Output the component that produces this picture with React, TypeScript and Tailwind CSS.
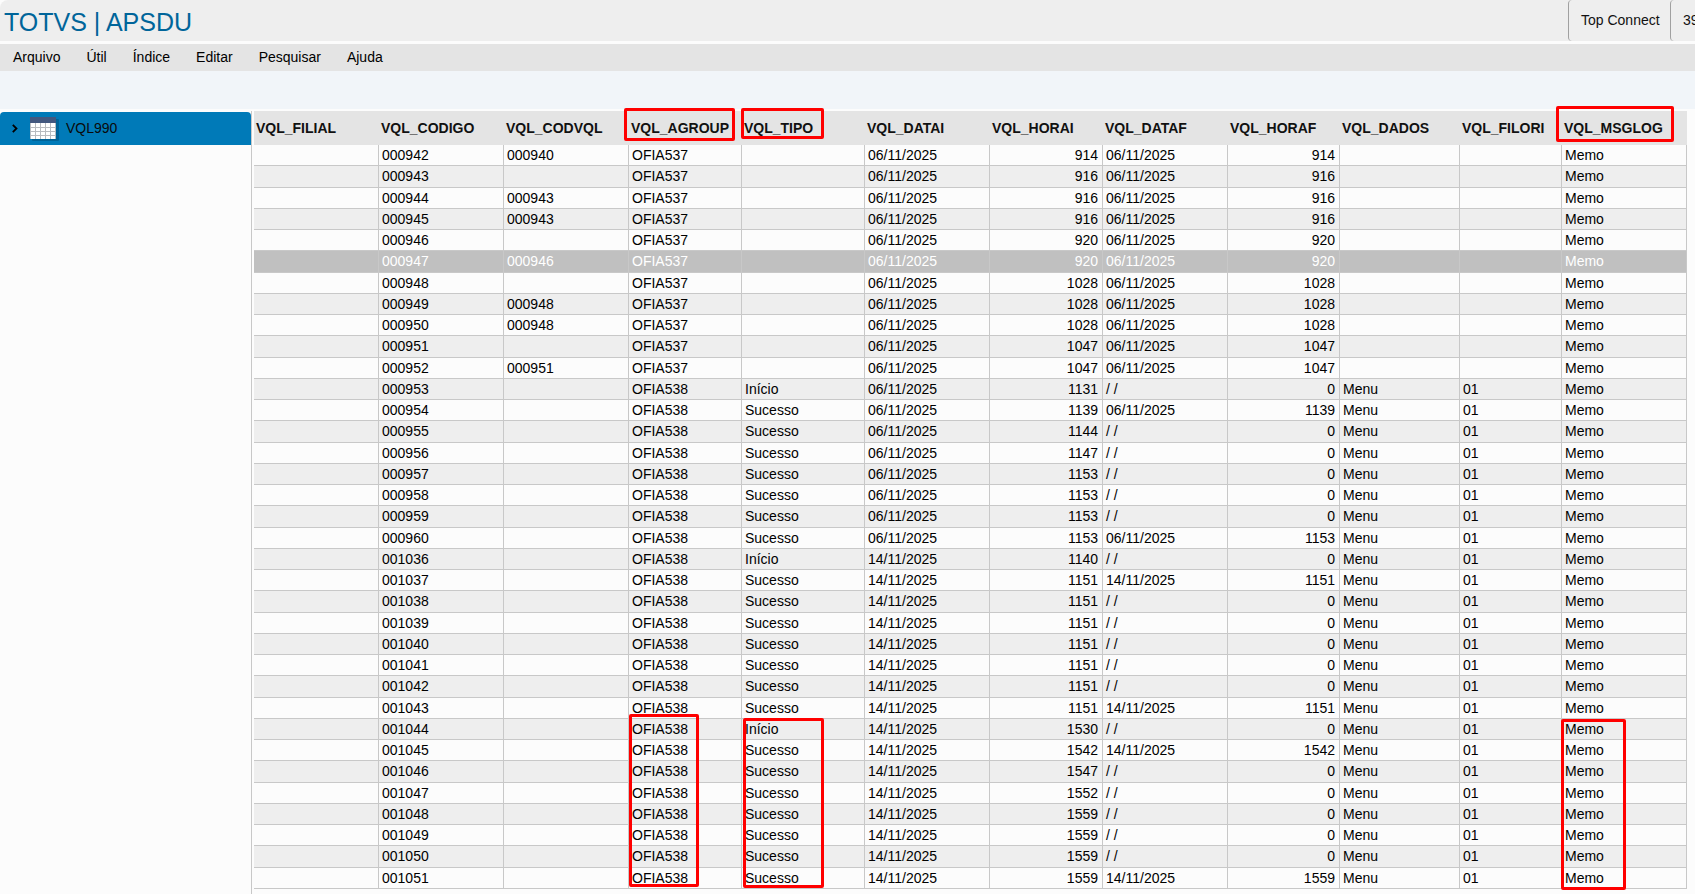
import clsx from "clsx";

const menuItems = ["Arquivo", "Útil", "Índice", "Editar", "Pesquisar", "Ajuda"];

const columns = [
  { name: "VQL_FILIAL", width: "w-[125px]" },
  { name: "VQL_CODIGO", width: "w-[125px]" },
  { name: "VQL_CODVQL", width: "w-[125px]" },
  { name: "VQL_AGROUP", width: "w-[113px]", mark: "-top-[3px] -left-[5px] h-[33px] w-[111px]" },
  { name: "VQL_TIPO", width: "w-[123px]", mark: "-top-[3px] -left-px h-[31px] w-[83px]" },
  { name: "VQL_DATAI", width: "w-[125px]" },
  { name: "VQL_HORAI", width: "w-[113px]" },
  { name: "VQL_DATAF", width: "w-[125px]" },
  { name: "VQL_HORAF", width: "w-[112px]" },
  { name: "VQL_DADOS", width: "w-[120px]" },
  { name: "VQL_FILORI", width: "w-[102px]" },
  { name: "VQL_MSGLOG", width: "w-[125px]", mark: "-top-[5px] -left-[6px] h-[36px] w-[118px]" },
];

const NOV6 = "06/11/2025";
const NOV14 = "14/11/2025";
const EMPTY = "/ /";

// codigo, codvql, agroup, tipo, datai, horai, dataf, horaf, dados, filori
const records: string[][] = [
  ["000942", "000940", "OFIA537", "", NOV6, "914", NOV6, "914", "", ""],
  ["000943", "", "OFIA537", "", NOV6, "916", NOV6, "916", "", ""],
  ["000944", "000943", "OFIA537", "", NOV6, "916", NOV6, "916", "", ""],
  ["000945", "000943", "OFIA537", "", NOV6, "916", NOV6, "916", "", ""],
  ["000946", "", "OFIA537", "", NOV6, "920", NOV6, "920", "", ""],
  ["000947", "000946", "OFIA537", "", NOV6, "920", NOV6, "920", "", ""],
  ["000948", "", "OFIA537", "", NOV6, "1028", NOV6, "1028", "", ""],
  ["000949", "000948", "OFIA537", "", NOV6, "1028", NOV6, "1028", "", ""],
  ["000950", "000948", "OFIA537", "", NOV6, "1028", NOV6, "1028", "", ""],
  ["000951", "", "OFIA537", "", NOV6, "1047", NOV6, "1047", "", ""],
  ["000952", "000951", "OFIA537", "", NOV6, "1047", NOV6, "1047", "", ""],
  ["000953", "", "OFIA538", "Início", NOV6, "1131", EMPTY, "0", "Menu", "01"],
  ["000954", "", "OFIA538", "Sucesso", NOV6, "1139", NOV6, "1139", "Menu", "01"],
  ["000955", "", "OFIA538", "Sucesso", NOV6, "1144", EMPTY, "0", "Menu", "01"],
  ["000956", "", "OFIA538", "Sucesso", NOV6, "1147", EMPTY, "0", "Menu", "01"],
  ["000957", "", "OFIA538", "Sucesso", NOV6, "1153", EMPTY, "0", "Menu", "01"],
  ["000958", "", "OFIA538", "Sucesso", NOV6, "1153", EMPTY, "0", "Menu", "01"],
  ["000959", "", "OFIA538", "Sucesso", NOV6, "1153", EMPTY, "0", "Menu", "01"],
  ["000960", "", "OFIA538", "Sucesso", NOV6, "1153", NOV6, "1153", "Menu", "01"],
  ["001036", "", "OFIA538", "Início", NOV14, "1140", EMPTY, "0", "Menu", "01"],
  ["001037", "", "OFIA538", "Sucesso", NOV14, "1151", NOV14, "1151", "Menu", "01"],
  ["001038", "", "OFIA538", "Sucesso", NOV14, "1151", EMPTY, "0", "Menu", "01"],
  ["001039", "", "OFIA538", "Sucesso", NOV14, "1151", EMPTY, "0", "Menu", "01"],
  ["001040", "", "OFIA538", "Sucesso", NOV14, "1151", EMPTY, "0", "Menu", "01"],
  ["001041", "", "OFIA538", "Sucesso", NOV14, "1151", EMPTY, "0", "Menu", "01"],
  ["001042", "", "OFIA538", "Sucesso", NOV14, "1151", EMPTY, "0", "Menu", "01"],
  ["001043", "", "OFIA538", "Sucesso", NOV14, "1151", NOV14, "1151", "Menu", "01"],
  ["001044", "", "OFIA538", "Início", NOV14, "1530", EMPTY, "0", "Menu", "01"],
  ["001045", "", "OFIA538", "Sucesso", NOV14, "1542", NOV14, "1542", "Menu", "01"],
  ["001046", "", "OFIA538", "Sucesso", NOV14, "1547", EMPTY, "0", "Menu", "01"],
  ["001047", "", "OFIA538", "Sucesso", NOV14, "1552", EMPTY, "0", "Menu", "01"],
  ["001048", "", "OFIA538", "Sucesso", NOV14, "1559", EMPTY, "0", "Menu", "01"],
  ["001049", "", "OFIA538", "Sucesso", NOV14, "1559", EMPTY, "0", "Menu", "01"],
  ["001050", "", "OFIA538", "Sucesso", NOV14, "1559", EMPTY, "0", "Menu", "01"],
  ["001051", "", "OFIA538", "Sucesso", NOV14, "1559", NOV14, "1559", "Menu", "01"],
];

const selectedCode = "000947";
const markedCode = "001044";

// boxes that start on the marked record and run to the last one
const bodyMarks: Record<number, string> = {
  3: "-top-[5px] left-0 h-[173px] w-[70px]",
  4: "-top-px left-px h-[170px] w-[81px]",
  11: "top-0 -left-px h-[171px] w-[65px]",
};

const Mark = ({ className }: { className: string }) => (
  <span
    className={clsx(
      "pointer-events-none absolute z-10 rounded-xs border-3 border-[#ff0000]",
      className,
    )}
  />
);

const TableIcon = () => (
  <svg width="30" height="26" viewBox="0 0 30 26" aria-hidden="true">
    <rect x="2" y="3" width="27" height="22" rx="1" fill="#00466e" opacity="0.45" />
    <rect x="0" y="1" width="26" height="22" fill="#b9bcc0" />
    <rect x="0" y="1" width="26" height="6" fill="#43587f" />
    <g fill="#ffffff">
      {[7, 12, 16, 20].map((y) =>
        [1, 6, 11, 16, 21].map((x) => (
          <rect key={`${x}-${y}`} x={x} y={y} width="4" height={y === 7 ? 4 : 3} />
        )),
      )}
    </g>
  </svg>
);

const Header = () => (
  <header className="flex h-[41px] items-stretch justify-between overflow-hidden rounded-tl-lg bg-[#eeeeee]">
    <h1 className="pl-1 text-[25px] leading-[44px] text-[#00659a]">
      TOTVS | APSDU
    </h1>
    <div className="flex text-sm text-[#111111]">
      <span className="flex w-[102px] items-center rounded-sm border-l border-[#a0a0a0] pb-0.5 pl-3">
        Top Connect
      </span>
      <span className="flex w-[25px] items-center overflow-hidden rounded-l-sm border-l border-[#a0a0a0] pb-0.5 pl-3">
        39
      </span>
    </div>
  </header>
);

const Menu = () => (
  <nav className="mt-[3px] flex h-[27px] items-center gap-[26px] bg-[#e4e4e4] pb-0.5 pl-[13px] text-sm text-black">
    {menuItems.map((item) => (
      <button key={item} type="button">
        {item}
      </button>
    ))}
  </nav>
);

const Sidebar = () => (
  <aside className="w-[252px] shrink-0 border-r border-[#c8c8c8] pt-px">
    <button
      type="button"
      className="flex h-[33px] w-full items-center rounded-t-sm bg-[#007ab8] text-sm text-[#0a0a0a]"
    >
      <svg className="ml-3" width="6" height="9" viewBox="0 0 6 9" aria-hidden="true">
        <path d="M0.8 0.8 4.5 4.5 0.8 8.2" fill="none" stroke="#000" strokeWidth="1.8" />
      </svg>
      <span className="ml-3">
        <TableIcon />
      </span>
      <span className="ml-1.5 pb-0.5">VQL990</span>
    </button>
  </aside>
);

const Grid = () => (
  <table className="w-full table-fixed border-separate border-spacing-0 text-sm">
    <colgroup>
      {columns.map((column) => (
        <col key={column.name} className={column.width} />
      ))}
    </colgroup>
    <thead>
      <tr className="h-[34px] bg-[#e4e4e4]">
        {columns.map((column) => (
          <th
            key={column.name}
            scope="col"
            className="relative p-0 pl-0.5 text-left font-bold whitespace-nowrap text-[#111111]"
          >
            {column.name}
            {column.mark && <Mark className={column.mark} />}
          </th>
        ))}
      </tr>
    </thead>
    <tbody>
      {records.map((record) => (
        <tr
          key={record[0]}
          className={clsx(
            "h-[21px] leading-5 nth-[4n+2]:h-[22px]",
            record[0] === selectedCode
              ? "bg-[#c0c0c0] text-white"
              : "text-black even:bg-[#eeeeee]",
          )}
        >
          {["", ...record, "Memo"].map((value, i) => (
            <td
              key={columns[i].name}
              className={clsx(
                "relative border-r border-b border-[#c8c8c8] p-0 pr-1 pl-[3px] align-top whitespace-nowrap",
                (i === 6 || i === 8) && "text-right",
              )}
            >
              {value}
              {record[0] === markedCode && bodyMarks[i] && (
                <Mark className={bodyMarks[i]} />
              )}
            </td>
          ))}
        </tr>
      ))}
    </tbody>
  </table>
);

export default function App() {
  return (
    <div className="flex min-h-screen flex-col bg-[#fcfcfc] font-['Liberation_Sans',Arial,sans-serif]">
      <Header />
      <Menu />
      <div className="h-[38px] bg-[#f1f5f9]" />
      <main className="flex flex-1 gap-[2px] pt-[2px]">
        <Sidebar />
        <section className="min-w-0 flex-1 pr-2">
          <Grid />
        </section>
      </main>
    </div>
  );
}
